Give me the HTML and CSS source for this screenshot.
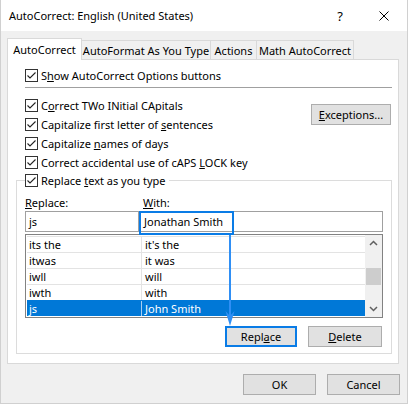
FILE: index.html
```html
<!DOCTYPE html>
<html>
<head>
<meta charset="utf-8">
<link rel="stylesheet" href="styles.css">
</head>
<body>
<div class="window">
  <div class="titlebar">
    <span class="title">AutoCorrect: English (United States)</span>
    <span class="help">?</span>
    <svg class="close" width="10" height="10" viewBox="0 0 10 10"><path d="M0.5 0.5 L9.5 9.5 M9.5 0.5 L0.5 9.5" stroke="#000" stroke-width="1" fill="none"/></svg>
  </div>
  <div class="body">
    <div class="tabs">
      <div class="tab active tab-1">AutoCorrect</div>
      <div class="tab tab-2">AutoFormat As You Type</div>
      <div class="tab tab-3">Actions</div>
      <div class="tab tab-4">Math AutoCorrect</div>
    </div>
    <div class="panel">
      <div class="cb-row indent">
        <span class="cb"><svg width="11" height="11" viewBox="0 0 11 11"><path d="M1.5 5.5 L4 8 L9.5 2.5" stroke="#222" stroke-width="1.1" fill="none"/></svg></span>
        <span>S<u>h</u>ow AutoCorrect Options buttons</span>
      </div>
      <div class="sep"></div>
      <div class="opts">
        <div class="opt-list">
          <div class="cb-row">
            <span class="cb"><svg width="11" height="11" viewBox="0 0 11 11"><path d="M1.5 5.5 L4 8 L9.5 2.5" stroke="#222" stroke-width="1.1" fill="none"/></svg></span>
            <span>C<u>o</u>rrect TWo INitial CApitals</span>
          </div>
          <div class="cb-row">
            <span class="cb"><svg width="11" height="11" viewBox="0 0 11 11"><path d="M1.5 5.5 L4 8 L9.5 2.5" stroke="#222" stroke-width="1.1" fill="none"/></svg></span>
            <span>Capitalize first letter of <u>s</u>entences</span>
          </div>
          <div class="cb-row">
            <span class="cb"><svg width="11" height="11" viewBox="0 0 11 11"><path d="M1.5 5.5 L4 8 L9.5 2.5" stroke="#222" stroke-width="1.1" fill="none"/></svg></span>
            <span>Capitalize <u>n</u>ames of days</span>
          </div>
          <div class="cb-row">
            <span class="cb"><svg width="11" height="11" viewBox="0 0 11 11"><path d="M1.5 5.5 L4 8 L9.5 2.5" stroke="#222" stroke-width="1.1" fill="none"/></svg></span>
            <span>Correct accidental use of cAPS <u>L</u>OCK key</span>
          </div>
        </div>
        <button class="btn exceptions"><u>E</u>xceptions...</button>
      </div>
      <div class="group">
        <div class="cb-row group-head">
          <span class="cb"><svg width="11" height="11" viewBox="0 0 11 11"><path d="M1.5 5.5 L4 8 L9.5 2.5" stroke="#222" stroke-width="1.1" fill="none"/></svg></span>
          <span>Replace <u>t</u>ext as you type</span>
        </div>
        <div class="labels">
          <span class="lbl-replace"><u>R</u>eplace:</span>
          <span class="lbl-with"><u>W</u>ith:</span>
        </div>
        <div class="inputs">
          <div class="input in-replace">js</div>
          <div class="input in-with">Jonathan Smith</div>
        </div>
        <div class="list">
          <div class="rows">
            <div class="row"><div class="cell c1">its the</div><div class="cell c2">it's the</div></div>
            <div class="row"><div class="cell c1">itwas</div><div class="cell c2">it was</div></div>
            <div class="row"><div class="cell c1">iwll</div><div class="cell c2">will</div></div>
            <div class="row"><div class="cell c1">iwth</div><div class="cell c2">with</div></div>
            <div class="row sel"><div class="cell c1">js</div><div class="cell c2">John Smith</div></div>
          </div>
          <div class="scrollbar">
            <div class="sb-btn"><svg width="17" height="17" viewBox="0 0 17 17"><polyline points="5,10 8.5,6.5 12,10" stroke="#606060" stroke-width="1.5" fill="none"/></svg></div>
            <div class="sb-track"><div class="thumb"></div></div>
            <div class="sb-btn"><svg width="17" height="17" viewBox="0 0 17 17"><polyline points="5,7 8.5,10.5 12,7" stroke="#606060" stroke-width="1.5" fill="none"/></svg></div>
          </div>
        </div>
        <div class="grp-buttons">
          <button class="btn replace">Repl<u>a</u>ce</button>
          <button class="btn delete"><u>D</u>elete</button>
        </div>
        <div class="hl-box"></div>
        <svg class="arrow" width="12" height="91" viewBox="0 0 12 91">
          <line x1="6" y1="0" x2="6" y2="82" stroke="#2f8ff5" stroke-width="2"/>
          <polygon points="6,91 1.5,76 6,81 10.5,76" fill="#2f8ff5"/>
        </svg>
      </div>
    </div>
    <div class="footer">
      <button class="btn foot-btn">OK</button>
      <button class="btn foot-btn">Cancel</button>
    </div>
  </div>
</div>
</body>
</html>
```
FILE: styles.css
```css
* { box-sizing: border-box; }
html, body { margin: 0; padding: 0; }
body {
  font-family: "Noto Sans", Lato, sans-serif;
  font-size: 11px;
  color: #000;
  background: #fff;
}
.window {
  width: 408px;
  height: 404px;
  border: 1px solid #d0d0d0;
  border-top: none;
  display: flex;
  flex-direction: column;
  background: #f0f0f0;
}
.titlebar {
  height: 31px;
  flex: none;
  background: #fff;
  display: flex;
  align-items: center;
  padding-left: 8px;
}
.title { flex: 1; }
.help {
  width: 12px;
  text-align: center;
  font-size: 13px;
  margin-right: 33px;
}
.close { margin-right: 18px; }
.body {
  flex: 1;
  padding: 7px 8px 0 6px;
}
.tabs {
  display: flex;
  align-items: flex-end;
  height: 21px;
  position: relative;
  z-index: 1;
}
.tab {
  height: 19px;
  border: 1px solid #d9d9d9;
  border-left: none;
  border-bottom: none;
  background: #f0f0f0;
  display: flex;
  align-items: center;
  justify-content: center;
  white-space: nowrap;
}
.tab.active {
  height: 22px;
  margin-bottom: -1px;
  border-left: 1px solid #d9d9d9;
  background: #fff;
}
.tab-1 { width: 75px; }
.tab-2 { width: 129px; }
.tab-3 { width: 46px; }
.tab-4 { width: 97px; }
.panel {
  background: #fff;
  border: 1px solid #d9d9d9;
  padding: 6px 6px 0 8px;
}
.cb-row {
  display: flex;
  align-items: center;
  height: 19px;
  white-space: nowrap;
}
.indent { margin-left: 9px; }
.cb {
  width: 13px;
  height: 13px;
  border: 1px solid #333;
  background: #fff;
  margin-right: 3px;
  flex: none;
  display: flex;
}
.sep {
  height: 1px;
  background: #a0a0a0;
  margin: 2px 0 0 9px;
}
.opts {
  display: flex;
  justify-content: space-between;
  margin: 8px 1px 0 9px;
}
.btn {
  height: 21px;
  background: #e1e1e1;
  border: 1px solid #adadad;
  font: inherit;
  color: #000;
  padding: 0;
  border-radius: 0;
}
.exceptions {
  width: 80px;
  margin-top: 8px;
}
.group {
  position: relative;
  border: 1px solid #dcdcdc;
  margin: 8px 0 9px 0;
  padding: 0 8px 6px 8px;
}
.group-head {
  width: max-content;
  margin-top: -10px;
  background: #fff;
  padding-right: 3px;
}
.labels {
  display: flex;
  align-items: center;
  height: 18px;
  margin-top: 3px;
}
.lbl-replace { width: 118px; }
.inputs { display: flex; }
.input {
  height: 21px;
  border: 1px solid #a0a0a0;
  padding-left: 3px;
  line-height: 19px;
  background: #fff;
}
.in-replace { width: 114px; }
.in-with { flex: 1; padding-left: 4px; }
.list {
  display: flex;
  margin-top: 2px;
  height: 84px;
  border: 1px solid #828282;
}
.rows {
  flex: 1;
  padding: 1px 0 0 1px;
}
.row {
  display: flex;
  height: 16px;
  border-top: 1px solid #e3e3e3;
}
.cell {
  line-height: 15px;
  padding-left: 2px;
  white-space: nowrap;
}
.c1 {
  width: 115px;
  border-right: 1px solid #e3e3e3;
}
.c2 { flex: 1; padding-left: 3px; }
.row.sel {
  background: #0078d7;
  color: #fff;
  border-top-color: #0078d7;
}
.row.sel .c1 { border-right-color: #a8cdf0; }
.scrollbar {
  width: 17px;
  background: #f0f0f0;
  display: flex;
  flex-direction: column;
}
.sb-btn { height: 17px; display: flex; }
.sb-track {
  flex: 1;
  padding-top: 16px;
}
.thumb {
  height: 17px;
  margin: 0 1px;
  background: #cdcdcd;
}
.grp-buttons {
  display: flex;
  justify-content: flex-end;
  margin-top: 8px;
  margin-right: 1px;
}
.replace {
  width: 72px;
  border: 2px solid #0a7ce6;
}
.delete {
  width: 74px;
  margin-left: 11px;
}
.hl-box {
  position: absolute;
  left: 122px;
  top: 30px;
  width: 95px;
  height: 24px;
  border: 2px solid #0a7ce6;
}
.arrow {
  position: absolute;
  left: 207px;
  top: 54px;
}
.footer {
  display: flex;
  justify-content: flex-end;
  padding-top: 10px;
  margin-right: -1px;
}
.foot-btn {
  width: 73px;
  margin-left: 11px;
}
```
